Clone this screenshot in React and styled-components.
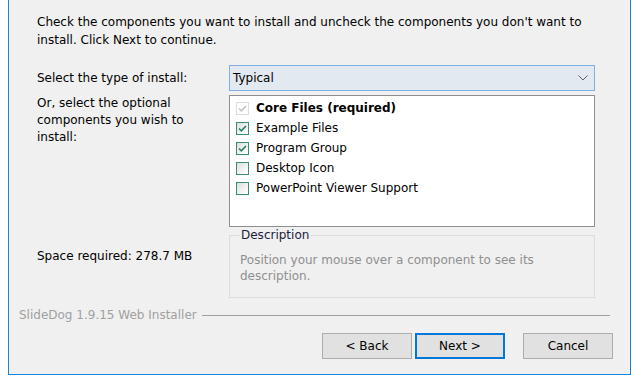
import React from "react";
import styled, { createGlobalStyle } from "styled-components";

const Global = createGlobalStyle`
    html, body {
        margin: 0;
        padding: 0;
        background: #ffffff;
    }
    body {
        font-family: "DejaVu Sans", "Liberation Sans", sans-serif;
        font-size: 12px;
        color: #000;
    }
`;

const Window = styled.div`
    box-sizing: border-box;
    margin-left: 8px;
    width: 623px;
    height: 375px;
    background: #f0f0f0;
    border: 1px solid #1883d7;
    border-top: none;
    display: flex;
    flex-direction: column;
`;

const Content = styled.div`
    padding: 13px 35px 0 28px;
`;

const Intro = styled.p`
    margin: 0;
    line-height: 18px;
`;

const Form = styled.div`
    margin-top: 16px;
    display: grid;
    grid-template-columns: 192px 1fr;
    row-gap: 4px;
`;

const Label = styled.div`
    line-height: 17px;
    align-self: ${(p) => (p.$center ? "center" : "start")};
`;

const Combo = styled.div`
    box-sizing: border-box;
    height: 26px;
    background: #e3e9f0;
    border: 1px solid #7eb2e4;
    display: flex;
    align-items: center;
    justify-content: space-between;
    padding: 0 6px 0 3px;
`;

const ListBox = styled.div`
    box-sizing: border-box;
    height: 132px;
    background: #fff;
    border: 1px solid #8f8f8f;
    padding: 2px 0 0 6px;
`;

const Item = styled.div`
    height: 20px;
    display: flex;
    align-items: center;
    gap: 7px;
    font-weight: ${(p) => (p.$bold ? "bold" : "normal")};
`;

const Box = styled.span`
    box-sizing: border-box;
    width: 13px;
    height: 13px;
    flex: none;
    border: 1px solid ${(p) => (p.$disabled ? "#dcdcdc" : "#3b8c79")};
    background: ${(p) =>
        p.$disabled ? "#fff" : "linear-gradient(135deg, #dcdcdc 0%, #f4f4f4 60%, #ffffff 100%)"};
    display: flex;
    align-items: center;
    justify-content: center;
`;

const Space = styled.div`
    padding-top: 17px;
    line-height: 17px;
`;

const Group = styled.fieldset`
    box-sizing: border-box;
    margin: -4px 0 0;
    height: 71px;
    border: 1px solid #dcdcdc;
    padding: 0 10px;
    min-width: 0;
`;

const Legend = styled.legend`
    padding: 0 1px;
    line-height: 16px;
    color: #1c1c3c;
`;

const Hint = styled.p`
    margin: 9px 0 0;
    line-height: 16px;
    color: #8f8f8f;
`;

const Footer = styled.div`
    margin-top: auto;
    padding: 0 20px 15px 10px;
`;

const Brand = styled.div`
    display: flex;
    align-items: center;
    gap: 5px;
    color: #a0a0a0;
    line-height: 16px;
    margin-bottom: -1px;
    padding-top: 1px;

    &::after {
        content: "";
        flex: 1;
        height: 1px;
        margin-top: 1px;
        background: #a0a0a0;
    }
`;

const Buttons = styled.div`
    margin-top: 11px;
    margin-right: -3px;
    display: flex;
    justify-content: flex-end;
`;

const Button = styled.button`
    box-sizing: border-box;
    width: 90px;
    height: 26px;
    margin-left: ${(p) => p.$gap || 0}px;
    background: #e1e1e1;
    border: 1px solid ${(p) => (p.$default ? "#0078d7" : "#adadad")};
    box-shadow: ${(p) => (p.$default ? "inset 0 0 0 1px #0078d7" : "none")};
    font: inherit;
    color: #000;
    padding: 0;
`;

const Check = ({ disabled }) => (
    <svg width="11" height="11" viewBox="0 0 11 11">
        <path
            d="M2 5.5 L4.3 7.8 L9 3"
            fill="none"
            stroke={disabled ? "#c4c4c4" : "#2a7d64"}
            strokeWidth="1.6"
        />
    </svg>
);

const Chevron = () => (
    <svg width="10" height="6" viewBox="0 0 10 6">
        <path d="M0.5 0.5 L5 5 L9.5 0.5" fill="none" stroke="#606060" strokeWidth="1" />
    </svg>
);

const components = [
    { name: "Core Files (required)", checked: true, disabled: true },
    { name: "Example Files", checked: true },
    { name: "Program Group", checked: true },
    { name: "Desktop Icon", checked: false },
    { name: "PowerPoint Viewer Support", checked: false },
];

const App = () => {
    return (
        <>
            <Global />
            <Window>
                <Content>
                    <Intro>
                        Check the components you want to install and uncheck the components you don't want to
                        install. Click Next to continue.
                    </Intro>
                    <Form>
                        <Label $center>Select the type of install:</Label>
                        <Combo>
                            <span>Typical</span>
                            <Chevron />
                        </Combo>
                        <Label>
                            Or, select the optional
                            <br />
                            components you wish to
                            <br />
                            install:
                        </Label>
                        <ListBox>
                            {components.map((c) => (
                                <Item key={c.name} $bold={c.disabled}>
                                    <Box $disabled={c.disabled}>
                                        {c.checked && <Check disabled={c.disabled} />}
                                    </Box>
                                    {c.name}
                                </Item>
                            ))}
                        </ListBox>
                        <Space>Space required: 278.7 MB</Space>
                        <Group>
                            <Legend>Description</Legend>
                            <Hint>
                                Position your mouse over a component to see its
                                <br />
                                description.
                            </Hint>
                        </Group>
                    </Form>
                </Content>
                <Footer>
                    <Brand>SlideDog 1.9.15 Web Installer</Brand>
                    <Buttons>
                        <Button>&lt; Back</Button>
                        <Button $default $gap={3}>
                            Next &gt;
                        </Button>
                        <Button $gap={18}>Cancel</Button>
                    </Buttons>
                </Footer>
            </Window>
        </>
    );
};

export default App;
